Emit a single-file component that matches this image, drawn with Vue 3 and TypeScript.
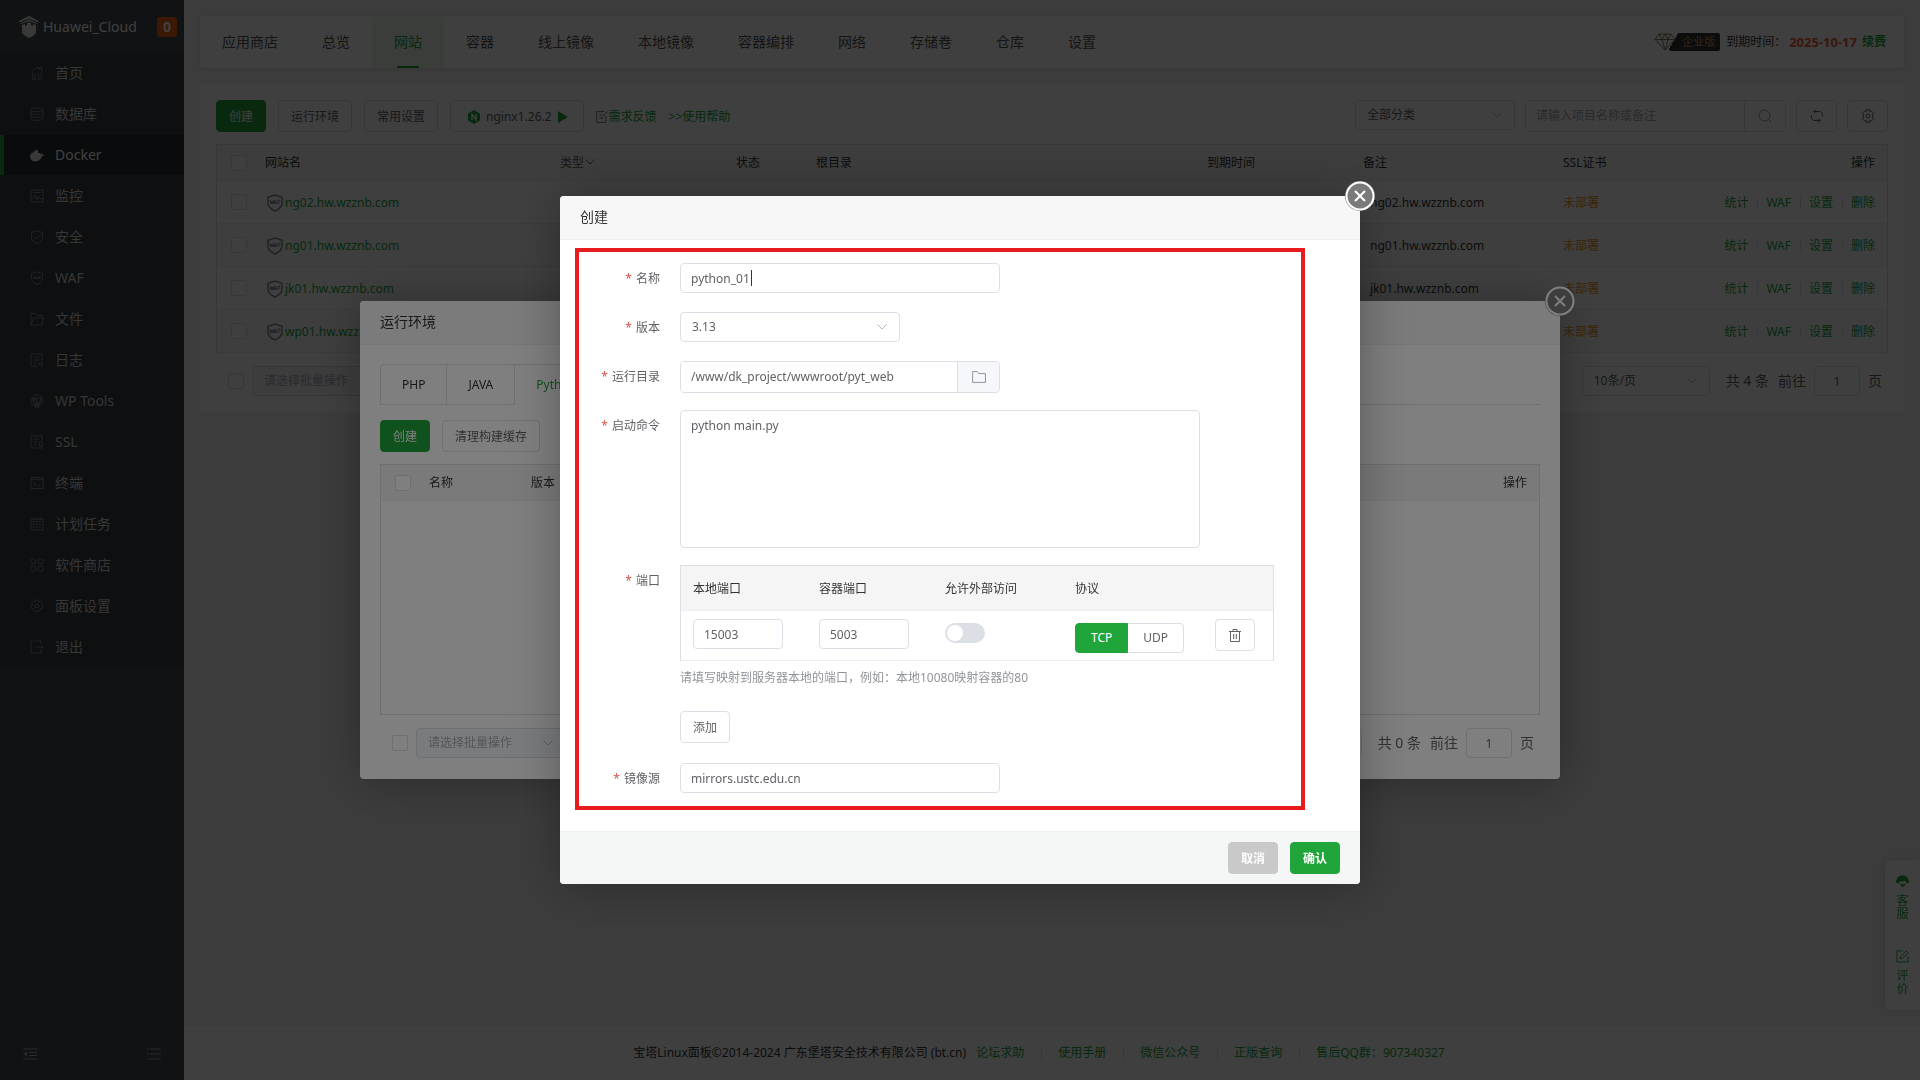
<script setup lang="ts">
import { ref } from 'vue'

interface MenuItem {
  label: string
  icon: string
  active?: boolean
}

const menu: MenuItem[] = [
  { label: '首页', icon: '<path d="M1 6.5 7 1l2.6 2.4V1.5h2v3.6L13 6.5M2.8 6v7.3h2.6V9.2c0-2 3.2-2 3.2 0v4.1h2.6V6"/>' },
  { label: '数据库', icon: '<ellipse cx="7" cy="2.8" rx="6" ry="2"/><path d="M1 2.8v8.4c0 1.2 2.7 2.2 6 2.2s6-1 6-2.2V2.8M1 5.6c0 1.2 2.7 2 6 2s6-.8 6-2M1 8.4c0 1.2 2.7 2 6 2s6-.8 6-2"/>' },
  { label: 'Docker', active: true, icon: '<path fill="currentColor" stroke="none" d="M0 7h1V5h2V3.600h2V2h3v3h2v1.800c.6-.2.700-1.200 1-2 .8.400 1.100 1 1 1.700.8 0 1.400 0 2 .4-.3 1-1.200 1.400-2.200 1.400C11 11.600 8.800 13.500 5 13.500 1.500 13.500 0 10.500 0 7z"/>' },
  { label: '监控', icon: '<path d="M1 1h12v12H1zM3.500 3.500h7M1 9.500h2.500L5 6.500l2 4 1.500-3.500 1 2.500H13"/>' },
  { label: '安全', icon: '<path d="M7 .8 12.500 2.500v5c0 3-2.500 4.800-5.500 6-3-1.200-5.500-3-5.500-6v-5zM4.500 6.800l2 2 3.500-3.500"/>' },
  { label: 'WAF', icon: '<path d="M7 .8 12.500 2.500v5c0 3-2.500 4.800-5.500 6-3-1.200-5.500-3-5.500-6v-5zM3.500 5.500l.6 2.500.8-2 .8 2 .5-2.500M6.800 8l.8-2.500.8 2.500M9.500 8V5.500H11M9.500 6.800h1.200"/>' },
  { label: '文件', icon: '<path d="M1 13V1.500h4.500L7 3.500h5.500V6M1 13h11l1.300-7H3.500L1 13z"/>' },
  { label: '日志', icon: '<path d="M12 8V1H1v12h7M3.500 4h6M3.500 7h6M3.500 10h3"/><circle cx="11" cy="11" r="1.700"/>' },
  { label: 'WP Tools', icon: '<circle cx="7" cy="7" r="6.200"/><path stroke-width="1.500" d="M2.500 4.500l3 8 2-5.500M5.500 4.500l3 8 2.500-7M2 4.500h3M5 4.500h3.500M9.800 3.500c1 .8 1.400 1.500 1.200 2.500"/>' },
  { label: 'SSL', icon: '<path d="M12 6V1H1v12h7M3.500 4h6M3.500 7h4M3.500 10h3"/><circle cx="11" cy="9" r="2"/><path d="M9.700 10.500v3l1.300-.8 1.300.8v-3"/>' },
  { label: '终端', icon: '<path d="M1 1.500h12v11H1zM1 3.200h12M3.500 6.200l2 1.700-2 1.700M7 10h3.500"/>' },
  { label: '计划任务', icon: '<path d="M1 2h12v11H1zM1 4.800h12M4 .5V3M7 .5V3M10 .5V3M3 7.300h2M6 7.300h2M9 7.300h2M3 10.200h2M6 10.200h2M9 10.200h2"/>' },
  { label: '软件商店', icon: '<rect x="1" y="1" width="4.800" height="4.800" rx="1"/><rect x="8.200" y="1" width="4.800" height="4.800" rx="1"/><rect x="1" y="8.200" width="4.800" height="4.800" rx="1"/><rect x="8.200" y="8.200" width="4.800" height="4.800" rx="1"/>' },
  { label: '面板设置', icon: '<path d="M5.500 1h3l.5 1.700 1.700-.6 1.600 2L11.500 6l1.700 1-.9 2.700-1.900-.1-.4 2-2.300 1.100L7 11.500l-1.200 1.200-2.400-1.100-.3-2-1.800.1L.8 7l1.700-1-.9-1.900 1.700-2 1.800.6z"/><circle cx="7" cy="7" r="2"/>' },
  { label: '退出', icon: '<path d="M11 4V1H1v12h10v-3M5 7h8M10.800 4.800 13 7l-2.200 2.200"/>' },
]

const tabs = ['应用商店', '总览', '网站', '容器', '线上镜像', '本地镜像', '容器编排', '网络', '存储卷', '仓库', '设置']
const sites = ['ng02.hw.wzznb.com', 'ng01.hw.wzznb.com', 'jk01.hw.wzznb.com', 'wp01.hw.wzznb.com']
const actions = ['统计', 'WAF', '设置', '删除']
const footerLinks = ['论坛求助', '使用手册', '微信公众号', '正版查询', '售后QQ群：907340327']
const envTabs = ['PHP', 'JAVA', 'Python', 'Node.js', 'Go']
const envActive = ref('Python')

const form = ref({
  name: 'python_01',
  version: '3.13',
  path: '/www/dk_project/wwwroot/pyt_web',
  command: 'python main.py',
  hostPort: '15003',
  containerPort: '5003',
  external: false,
  protocol: 'TCP',
  mirror: 'mirrors.ustc.edu.cn',
})
</script>

<template>
  <div class="layout">
    <aside class="sidebar">
      <div class="brand">
        <svg class="brand-logo" viewBox="0 0 20 22" aria-hidden="true">
          <path d="M10 0 20 5v1.500L10 2.500 0 6.500V5zM10 3.500l8 3.500v1l-8-3-8 3V7z" />
          <path d="M3 9l3-1.200V10l2-1V7l2-.8 2 .8v2l2 1V7.800L17 9v7.500c-1 2.500-4 4.500-7 5.500-3-1-6-3-7-5.500z" />
        </svg>
        <span class="brand-name">Huawei_Cloud</span>
        <span class="brand-badge">0</span>
      </div>
      <nav class="menu">
        <a v-for="m in menu" :key="m.label" href="#" class="menu-item" :class="{ active: m.active }">
          <svg viewBox="0 0 14 14" aria-hidden="true" v-html="m.icon"></svg>
          <span>{{ m.label }}</span>
        </a>
      </nav>
      <div class="side-tools">
        <button type="button" aria-label="收起菜单">
          <svg viewBox="0 0 14 12"><path d="M0 1h14M6 4.500h8M6 7.500h8M0 11h14" /><path class="solid" d="M4 3.500v5L.5 6z" /></svg>
        </button>
        <button type="button" aria-label="菜单列表">
          <svg viewBox="0 0 14 12"><path d="M0 1h2M3 1h11M0 6h2M3 6h11M0 11h2M3 11h11" /></svg>
        </button>
      </div>
    </aside>

    <main class="main">
      <div class="content">
        <header class="topbar">
          <nav class="tabs">
            <a v-for="t in tabs" :key="t" href="#" class="tab" :class="{ active: t === '网站' }">{{ t }}</a>
          </nav>
          <div class="license">
            <span class="edition">
              <svg viewBox="0 0 22 18" aria-hidden="true">
                <path d="M5 1h12l4 5.500L11 17 1 6.500zM1 6.500h20M5 1l3 5.500L11 1l3 5.500L17 1M8 6.500 11 17l3-10.500" />
              </svg>
              <span class="edition-tag">企业版</span>
            </span>
            <span>到期时间：</span>
            <strong class="expire">2025-10-17</strong>
            <a href="#" class="renew">续费</a>
          </div>
        </header>

        <section class="card">
          <div class="toolbar">
            <button type="button" class="btn primary">创建</button>
            <button type="button" class="btn">运行环境</button>
            <button type="button" class="btn">常用设置</button>
            <button type="button" class="btn nginx">
              <svg class="nginx-logo" viewBox="0 0 12 14" aria-hidden="true">
                <path fill="#20a53a" d="M6 0l6 3.500v7L6 14 0 10.500v-7z" />
                <path fill="none" stroke="#fff" stroke-width="1.400" d="M4 10V4.300L8 9.700V4" />
              </svg>
              <span>nginx1.26.2</span>
              <svg class="play" viewBox="0 0 10 12" aria-hidden="true"><path fill="#20a53a" d="M0 0l10 6-10 6z" /></svg>
            </button>
            <a href="#" class="feedback">
              <svg viewBox="0 0 12 12" aria-hidden="true"><path d="M8 .6H.6v10.800h9.200V5M3 4h3M3 7h4M6.500 5.500 11.500.5" /></svg>需求反馈
            </a>
            <a href="#" class="help">&gt;&gt;使用帮助</a>
            <div class="tool-right">
              <div class="select cat">
                <select aria-label="分类"><option>全部分类</option></select>
                <svg viewBox="0 0 10 6" aria-hidden="true"><path d="M.5.5 5 5 9.500.5" /></svg>
              </div>
              <div class="search">
                <input type="text" aria-label="搜索" placeholder="请输入项目名称或备注" />
                <button type="button" aria-label="搜索按钮">
                  <svg viewBox="0 0 14 14"><circle cx="6.500" cy="6.500" r="5.500" /><path d="M10.500 10.500 13 13" /></svg>
                </button>
              </div>
              <button type="button" class="btn square" aria-label="刷新">
                <svg viewBox="0 0 14 14"><path d="M3.800 2.500H9c2.200 0 3.500 1.300 3.500 3.500v1.500M5.800.500l-2 2 2 2M1.500 6.500V8c0 2.200 1.300 3.500 3.500 3.500h5.200M8.200 9.500l2 2-2 2" /></svg>
              </button>
              <button type="button" class="btn square" aria-label="表格设置">
                <svg viewBox="0 0 14 14"><path d="M5.500.8h3L9 2.600l1.700-.5 1.800 2.400L11.500 6v2l1 1.500-1.800 2.400L9 11.400l-.5 1.800h-3L5 11.400l-1.700.5L1.500 9.500l1-1.500V6l-1-1.500 1.800-2.400L5 2.600z" /><circle cx="7" cy="7" r="2" /></svg>
              </button>
            </div>
          </div>

          <table class="grid sites">
            <colgroup>
              <col class="c-check" /><col class="c-name" /><col class="c-type" /><col class="c-state" /><col /><col class="c-date" /><col class="c-note" /><col class="c-ssl" /><col class="c-op" />
            </colgroup>
            <thead>
              <tr>
                <th class="chk"><input type="checkbox" aria-label="全选" /></th>
                <th>网站名</th>
                <th class="sortable">类型<svg viewBox="0 0 10 6" aria-hidden="true"><path d="M.5.5 5 5 9.500.5" /></svg></th>
                <th>状态</th>
                <th>根目录</th>
                <th>到期时间</th>
                <th>备注</th>
                <th>SSL证书</th>
                <th class="right">操作</th>
              </tr>
            </thead>
            <tbody>
              <tr v-for="s in sites" :key="s">
                <td class="chk"><input type="checkbox" :aria-label="s" /></td>
                <td>
                  <a href="#" class="site">
                    <svg viewBox="0 0 16 18" aria-hidden="true">
                      <path stroke-width="1.500" d="M8 1l7 2.200V9c0 4-3.500 6.500-7 8-3.500-1.500-7-4-7-8V3.200z" />
                      <path d="M3 6l1 4 1-3 1 3 .8-4M7.400 10l1-4 1 4M7.700 8.800h1.500M11 10V6.200h2.200M11 8h1.800" />
                    </svg>{{ s }}
                  </a>
                </td>
                <td></td>
                <td></td>
                <td></td>
                <td></td>
                <td class="note">{{ s }}</td>
                <td><a href="#" class="warn">未部署</a></td>
                <td class="right">
                  <span class="ops"><a v-for="a in actions" :key="a" href="#">{{ a }}</a></span>
                </td>
              </tr>
            </tbody>
          </table>

          <div class="pager">
            <input type="checkbox" aria-label="选择全部" />
            <div class="select batch">
              <select aria-label="批量操作" disabled><option>请选择批量操作</option></select>
              <svg viewBox="0 0 10 6" aria-hidden="true"><path d="M.5.5 5 5 9.500.5" /></svg>
            </div>
            <div class="select size">
              <select aria-label="每页条数"><option>10条/页</option></select>
              <svg viewBox="0 0 10 6" aria-hidden="true"><path d="M.5.5 5 5 9.500.5" /></svg>
            </div>
            <span class="total">共 4 条</span>
            <label class="jump">前往 <input type="text" value="1" /> 页</label>
          </div>
        </section>
      </div>

      <footer class="footer">
        <span>宝塔Linux面板©2014-2024 广东堡塔安全技术有限公司 (bt.cn)</span>
        <span class="footer-links"><a v-for="l in footerLinks" :key="l" href="#">{{ l }}</a></span>
      </footer>
    </main>

    <div class="float">
      <a href="#">
        <svg viewBox="0 0 14 14" aria-hidden="true"><path fill="#20a53a" d="M7 .5c3.500 0 6 2 6.200 4.500.6.300.8 1 .8 1.800 0 1.200-.6 2-1.600 2l-1.100.2L10 6C8.500 7 5.500 7.300 4 6.800L2.900 9C.8 9.300 0 8.300 0 7c0-.8.200-1.500.8-1.800C1 2.500 3.500.5 7 .5zM4 8.500c1 2 5 2 6.500 0-.3 2.500-1.800 3.800-3.500 4.500-1.600-.8-2.700-2.200-3-4.500z" /></svg>
        <span>客服</span>
      </a>
      <a href="#">
        <svg viewBox="0 0 14 14" aria-hidden="true"><path fill="none" stroke="#20a53a" d="M7.500 1H1v12h12V7M4.500 9.500l.6-2.600L11 1l2 2-6 6z" /></svg>
        <span>评价</span>
      </a>
    </div>

    <div class="mask">
      <section class="dialog env" role="dialog" aria-label="运行环境">
        <button type="button" class="close" aria-label="关闭运行环境">
          <svg viewBox="0 0 30 30"><circle cx="15" cy="15" r="13.500" /><path d="M10 10l10 10M20 10 10 20" /></svg>
        </button>
        <h2 class="dialog-title">运行环境</h2>
        <div class="env-body">
          <div class="env-tabs">
            <button v-for="t in envTabs" :key="t" type="button" :class="{ active: t === envActive }" @click="envActive = t">{{ t }}</button>
          </div>
          <div class="env-actions">
            <button type="button" class="btn primary">创建</button>
            <button type="button" class="btn">清理构建缓存</button>
          </div>
          <div class="env-table">
            <table class="grid">
              <colgroup><col class="c-check" /><col class="c-env" /><col /><col class="c-ssl" /></colgroup>
              <thead>
                <tr>
                  <th class="chk"><input type="checkbox" aria-label="全选环境" /></th>
                  <th>名称</th>
                  <th>版本</th>
                  <th class="right">操作</th>
                </tr>
              </thead>
            </table>
          </div>
          <div class="pager">
            <input type="checkbox" aria-label="选择全部环境" />
            <div class="select batch">
              <select aria-label="环境批量操作" disabled><option>请选择批量操作</option></select>
              <svg viewBox="0 0 10 6" aria-hidden="true"><path d="M.5.5 5 5 9.500.5" /></svg>
            </div>
            <div class="select size">
              <select aria-label="环境每页条数"><option>10条/页</option></select>
              <svg viewBox="0 0 10 6" aria-hidden="true"><path d="M.5.5 5 5 9.500.5" /></svg>
            </div>
            <span class="total">共 0 条</span>
            <label class="jump">前往 <input type="text" value="1" /> 页</label>
          </div>
        </div>
      </section>
    </div>

    <div class="mask">
      <section class="dialog create" role="dialog" aria-label="创建">
        <button type="button" class="close" aria-label="关闭">
          <svg viewBox="0 0 30 30"><circle cx="15" cy="15" r="13.500" /><path d="M10 10l10 10M20 10 10 20" /></svg>
        </button>
        <h2 class="dialog-title">创建</h2>
        <form class="form" @submit.prevent>
          <div class="marked">
            <div class="row">
              <label for="f-name">名称</label>
              <div class="control">
                <input id="f-name" v-model="form.name" class="field wide" type="text" />
                <i class="caret"></i>
              </div>
            </div>
            <div class="row">
              <label for="f-version">版本</label>
              <div class="select version">
                <select id="f-version" v-model="form.version"><option>3.13</option></select>
                <svg viewBox="0 0 10 6" aria-hidden="true"><path d="M.5.5 5 5 9.500.5" /></svg>
              </div>
            </div>
            <div class="row">
              <label for="f-path">运行目录</label>
              <div class="path">
                <input id="f-path" v-model="form.path" type="text" />
                <button type="button" aria-label="选择目录">
                  <svg viewBox="0 0 14 12"><path d="M.6.600h4.600l1.500 2h6.700v8.800H.6z" /></svg>
                </button>
              </div>
            </div>
            <div class="row">
              <label for="f-command">启动命令</label>
              <textarea id="f-command" v-model="form.command" spellcheck="false"></textarea>
            </div>
            <div class="row">
              <label for="f-host">端口</label>
              <div class="ports">
                <table class="grid port-table">
                  <colgroup><col class="p-a" /><col class="p-a" /><col class="p-b" /><col class="p-c" /><col /></colgroup>
                  <thead>
                    <tr><th>本地端口</th><th>容器端口</th><th>允许外部访问</th><th>协议</th><th></th></tr>
                  </thead>
                  <tbody>
                    <tr>
                      <td><input id="f-host" v-model="form.hostPort" class="field" type="text" /></td>
                      <td><input v-model="form.containerPort" class="field" type="text" aria-label="容器端口" /></td>
                      <td class="toggle"><input v-model="form.external" class="switch" type="checkbox" role="switch" aria-label="允许外部访问" /></td>
                      <td class="toggle">
                        <span class="proto">
                          <label v-for="p in ['TCP', 'UDP']" :key="p" :class="{ on: form.protocol === p }">
                            <input v-model="form.protocol" type="radio" name="protocol" :value="p" />{{ p }}
                          </label>
                        </span>
                      </td>
                      <td>
                        <button type="button" class="btn trash" aria-label="删除端口">
                          <svg viewBox="0 0 12 13"><path d="M0 2.500h12M4 2.500v-2h4v2M1.500 2.500v10h9v-10M4.700 5v5M7.300 5v5" /></svg>
                        </button>
                      </td>
                    </tr>
                  </tbody>
                </table>
                <p class="hint">请填写映射到服务器本地的端口，例如：本地10080映射容器的80</p>
                <button type="button" class="btn">添加</button>
              </div>
            </div>
            <div class="row">
              <label for="f-mirror">镜像源</label>
              <input id="f-mirror" v-model="form.mirror" class="field wide" type="text" />
            </div>
          </div>
          <div class="dialog-footer">
            <button type="button" class="btn cancel">取消</button>
            <button type="submit" class="btn primary strong">确认</button>
          </div>
        </form>
      </section>
    </div>
  </div>
</template>

<style>
body {
  background: #f0f0f0;
}
</style>

<style scoped>
* {
  box-sizing: border-box;
}
.layout {
  display: flex;
  min-height: 100vh;
  font-family: "Noto Sans", "Noto Sans CJK SC", sans-serif;
  font-size: 12px;
  line-height: 18px;
  color: #333;
}
a {
  color: #20a53a;
  text-decoration: none;
}
button,
input,
select,
textarea {
  font: inherit;
  color: #606266;
  margin: 0;
  outline: none;
}
svg {
  display: block;
  flex: none;
  fill: none;
  stroke: currentColor;
}

/* sidebar */
.sidebar {
  display: flex;
  flex-direction: column;
  width: 184px;
  flex: none;
  background: #42484d;
}
.brand {
  display: flex;
  align-items: center;
  height: 53px;
  padding: 0 7px 0 19px;
  color: #fff;
  font-size: 14px;
}
.brand-logo {
  width: 20px;
  height: 22px;
  fill: #e6e6e6;
  stroke: none;
}
.brand-name {
  margin-left: 4px;
}
.brand-badge {
  width: 20px;
  margin-left: auto;
  border-radius: 3px;
  background: #f0641e;
  font-weight: 700;
  line-height: 20px;
  text-align: center;
}
.menu {
  display: flex;
  flex-direction: column;
  gap: 1px;
  background: #363c40;
}
.menu-item {
  display: flex;
  align-items: center;
  gap: 11px;
  height: 40px;
  padding-left: 26px;
  border-left: 4px solid transparent;
  color: #d6d8da;
  font-size: 14px;
}
.menu-item svg {
  width: 14px;
  height: 14px;
  color: #85898c;
}
.menu-item.active {
  border-left-color: #20a53a;
  background: #282d30;
  color: #fff;
}
.menu-item.active svg {
  color: #e6e6e6;
}
.side-tools {
  display: flex;
  justify-content: space-between;
  margin-top: auto;
  padding: 0 23px 20px;
}
.side-tools button {
  padding: 0;
  border: 0;
  background: none;
  color: #a9acae;
}
.side-tools svg {
  width: 14px;
  height: 12px;
}
.side-tools .solid {
  fill: currentColor;
  stroke: none;
}

/* page */
.main {
  display: flex;
  flex: 1;
  flex-direction: column;
  min-width: 0;
}
.content {
  display: flex;
  flex: 1;
  flex-direction: column;
  gap: 16px;
  padding: 16px;
}
.topbar {
  display: flex;
  align-items: center;
  justify-content: space-between;
  height: 52px;
  padding-right: 18px;
  border-radius: 4px;
  background: #fff;
  box-shadow: 0 1px 3px 1px rgba(0, 0, 0, 0.06);
}
.tabs {
  display: flex;
  height: 100%;
}
.tab {
  display: flex;
  position: relative;
  align-items: center;
  padding: 0 22px;
  border-radius: 4px;
  color: #555;
  font-size: 14px;
}
.tab.active {
  background: #e9f6eb;
  color: #20a53a;
}
.tab.active::after {
  position: absolute;
  bottom: 0;
  left: 25px;
  width: 22px;
  height: 2px;
  background: #20a53a;
  content: "";
}
.license {
  display: flex;
  align-items: center;
}
.edition {
  display: flex;
  margin-right: 6px;
}
.edition svg {
  position: relative;
  width: 22px;
  height: 18px;
  margin-right: -7px;
  color: #8f7d5b;
}
.edition-tag {
  padding: 0 5px 0 13px;
  border-radius: 2px;
  background: linear-gradient(120deg, transparent 8px, #333 8px);
  color: #b8975a;
  font-size: 11px;
}
.expire {
  margin: 0 5px 0 3px;
  color: #ef5a37;
  font-size: 13px;
}
.renew {
  font-weight: 700;
}
.card {
  padding: 16px;
  border-radius: 4px;
  background: #fff;
}
.toolbar {
  display: flex;
  align-items: flex-start;
  gap: 12px;
  margin-bottom: 12px;
}
.btn {
  height: 32px;
  padding: 1px 12px 0;
  border: 1px solid #dcdfe6;
  border-radius: 4px;
  background: #fff;
  color: #606266;
  line-height: 30px;
  white-space: nowrap;
}
.btn.primary {
  border-color: #20a53a;
  background: #20a53a;
  color: #fff;
}
.btn.nginx {
  display: flex;
  align-items: center;
  gap: 6px;
  padding: 1px 15px 0 17px;
}
.nginx-logo {
  width: 12px;
  height: 14px;
  stroke: none;
}
.play {
  width: 10px;
  height: 12px;
  stroke: none;
}
.feedback,
.help {
  display: flex;
  align-items: center;
  height: 32px;
  padding-top: 2px;
}
.feedback {
  gap: 1px;
}
.feedback svg {
  width: 12px;
  height: 12px;
  color: #777;
}
.tool-right {
  display: flex;
  align-items: flex-start;
  gap: 10px;
  margin-left: auto;
}
.select {
  position: relative;
}
.select select {
  display: block;
  width: 100%;
  height: 30px;
  padding: 0 28px 0 11px;
  border: 1px solid #dcdfe6;
  border-radius: 4px;
  appearance: none;
  background: #fff;
  opacity: 1;
}
.select svg {
  position: absolute;
  top: 12px;
  right: 13px;
  width: 10px;
  height: 6px;
  color: #b4b8c0;
  pointer-events: none;
}
.select.cat {
  width: 160px;
}
.search,
.path {
  display: flex;
  height: 32px;
  border: 1px solid #dcdfe6;
  border-radius: 4px;
  overflow: hidden;
}
.search {
  width: 261px;
}
.search input,
.path input {
  flex: 1;
  min-width: 0;
  padding: 0 10px;
  border: 0;
  background: #fff;
}
.search input::placeholder {
  color: #a8abb2;
}
.search button,
.path button {
  display: flex;
  align-items: center;
  justify-content: center;
  width: 42px;
  padding: 0;
  border: 0;
  border-left: 1px solid #dcdfe6;
  background: #f5f7fa;
  color: #909399;
}
.search button {
  width: 41px;
  background: #fff;
}
.search svg,
.square svg {
  width: 14px;
  height: 14px;
}
.btn.square {
  display: flex;
  align-items: center;
  justify-content: center;
  width: 41px;
  padding: 0;
}

/* tables */
.grid {
  width: 100%;
  border: 1px solid #dcdfe6;
  border-spacing: 0;
  table-layout: fixed;
}
.grid th,
.grid td {
  padding: 0 12px;
  border-bottom: 1px solid #ebeef5;
  text-align: left;
  white-space: nowrap;
}
.grid th {
  height: 36px;
  background: #f5f5f5;
  font-weight: 400;
}
.sites {
  border-bottom: 0;
}
.sites td {
  height: 43px;
  padding-top: 2px;
}
.grid .chk {
  padding: 0 0 0 14px;
}
.grid .right {
  text-align: right;
}
.sites tbody tr:nth-child(even) {
  background: #fafafa;
}
.c-check {
  width: 36px;
}
.c-name {
  width: 295px;
}
.c-type {
  width: 176px;
}
.c-state {
  width: 80px;
}
.c-date {
  width: 156px;
}
.c-note,
.c-op {
  width: 200px;
}
.c-ssl {
  width: 136px;
}
.c-env {
  width: 102px;
}
.sortable {
  color: #606266;
}
.sortable svg {
  display: inline-block;
  width: 10px;
  height: 6px;
  margin-left: 1px;
  vertical-align: 2px;
}
input[type="checkbox"]:not(.switch) {
  display: block;
  width: 16px;
  height: 16px;
  border: 1px solid #dcdfe6;
  border-radius: 2px;
  appearance: none;
  background: #fff;
}
.site {
  display: flex;
  align-items: center;
  gap: 2px;
  padding-left: 2px;
}
.site svg {
  width: 16px;
  height: 18px;
  color: #85888c;
}
.grid .note {
  padding-left: 19px;
}
.warn {
  color: #e6982c;
}
.ops a + a::before {
  display: inline-block;
  width: 1px;
  height: 12px;
  margin: 0 8px 0 9px;
  background: #dcdfe6;
  vertical-align: -2px;
  content: "";
}

/* pagination */
.pager {
  display: flex;
  align-items: center;
  height: 30px;
  margin-top: 13px;
  padding: 0 6px 0 12px;
}
.select.batch {
  width: 150px;
  margin-left: 8px;
}
.select.batch select {
  background: #f5f7fa;
  color: #a8abb2;
}
.select.size {
  width: 128px;
  margin-left: auto;
}
.total {
  margin: 0 9px 0 16px;
  color: #606266;
  font-size: 14px;
}
.jump {
  display: flex;
  align-items: center;
  gap: 8px;
  color: #606266;
  font-size: 14px;
}
.jump input {
  width: 46px;
  height: 30px;
  padding: 0;
  border: 1px solid #dcdfe6;
  border-radius: 4px;
  background: #fff;
  font-size: 12px;
  text-align: center;
}

/* footer */
.footer {
  display: flex;
  align-items: center;
  justify-content: center;
  gap: 10px;
  height: 54px;
  padding-right: 26px;
  background: #fff;
}
.footer-links a + a::before {
  display: inline-block;
  width: 1px;
  height: 12px;
  margin: 0 16px 0 17px;
  background: #dcdfe6;
  vertical-align: -2px;
  content: "";
}

/* contact strip */
.float {
  display: flex;
  position: fixed;
  right: 0;
  bottom: 70px;
  flex-direction: column;
  gap: 30px;
  width: 35px;
  height: 150px;
  padding-top: 15px;
  border-radius: 6px 0 0 6px;
  background: #fff;
  box-shadow: 0 0 6px rgba(0, 0, 0, 0.12);
}
.float a {
  display: flex;
  flex-direction: column;
  align-items: center;
  gap: 6px;
}
.float svg {
  width: 13px;
  height: 13px;
  stroke: none;
}
.float span {
  width: 12px;
  line-height: 13px;
}

/* dialogs */
.mask {
  display: flex;
  position: fixed;
  inset: 0;
  align-items: center;
  justify-content: center;
  background: rgba(0, 0, 0, 0.5);
}
.dialog {
  position: relative;
  border-radius: 4px;
  background: #fff;
  box-shadow: 1px 1px 50px rgba(0, 0, 0, 0.3);
}
.dialog.env {
  width: 1200px;
}
.dialog.create {
  width: 800px;
}
.close {
  position: absolute;
  top: -15px;
  right: -15px;
  width: 30px;
  height: 30px;
  padding: 0;
  border: 0;
  border-radius: 50%;
  background: #7a7a7a;
  color: #fff;
}
.close svg {
  width: 30px;
  height: 30px;
  stroke-width: 2px;
}
.dialog-title {
  height: 44px;
  margin: 0;
  padding-left: 20px;
  border-bottom: 1px solid #eee;
  border-radius: 4px 4px 0 0;
  background: #f7f7f7;
  font-size: 14px;
  font-weight: 400;
  line-height: 42px;
}
.env-body {
  padding: 19px 20px 21px;
}
.env-tabs {
  display: flex;
  height: 41px;
  border-bottom: 1px solid #dcdfe6;
}
.env-tabs button {
  height: 41px;
  padding: 0 21px;
  border: 1px solid #dcdfe6;
  border-left: 0;
  background: #fff;
  color: #333;
}
.env-tabs button:first-child {
  border-left: 1px solid #dcdfe6;
  border-radius: 4px 0 0 0;
}
.env-tabs button.active {
  border-bottom-color: #fff;
  color: #20a53a;
}
.env-actions {
  display: flex;
  gap: 12px;
  margin: 15px 0 12px;
}
.env-table {
  height: 251px;
  border: 1px solid #dcdfe6;
}
.env-table .grid {
  border: 0;
}

/* create form */
.marked {
  display: flex;
  flex-direction: column;
  gap: 17px;
  width: 730px;
  margin: 8px 0 21px 15px;
  padding: 11px 0;
  border: 4px solid #e81c1c;
}
.row {
  display: flex;
  align-items: flex-start;
}
.row > label {
  width: 81px;
  margin-right: 20px;
  color: #606266;
  line-height: 32px;
  text-align: right;
}
.row > label::before {
  margin-right: 4px;
  color: #d9534f;
  content: "*";
}
.field {
  display: block;
  width: 90px;
  height: 30px;
  padding: 1px 10px 0;
  border: 1px solid #dcdfe6;
  border-radius: 4px;
  background: #fff;
}
.field.wide,
.path {
  width: 320px;
}
.control {
  position: relative;
}
.caret {
  position: absolute;
  top: 7px;
  left: 71px;
  width: 1px;
  height: 16px;
  background: #333;
}
.select.version {
  width: 220px;
}
.path button svg {
  width: 14px;
  height: 12px;
}
textarea {
  width: 520px;
  height: 138px;
  padding: 6px 10px;
  border: 1px solid #dcdfe6;
  border-radius: 4px;
  background: #fff;
  resize: none;
}
.ports {
  width: 594px;
  padding-bottom: 3px;
}
.port-table {
  border-bottom: 0;
}
.port-table th {
  height: 45px;
  padding-top: 1px;
}
.port-table td {
  height: 50px;
  padding-top: 8px;
  vertical-align: top;
}
.port-table .toggle {
  padding-top: 12px;
}
.p-a {
  width: 126px;
}
.p-b {
  width: 130px;
}
.p-c {
  width: 140px;
}
.switch {
  display: block;
  position: relative;
  width: 40px;
  height: 20px;
  border-radius: 10px;
  appearance: none;
  background: #dcdfe6;
}
.switch::before {
  position: absolute;
  top: 2px;
  left: 2px;
  width: 16px;
  height: 16px;
  border-radius: 50%;
  background: #fff;
  content: "";
}
.proto {
  display: flex;
}
.proto label {
  position: relative;
  height: 30px;
  padding: 0 15px;
  border: 1px solid #dcdfe6;
  border-radius: 0 4px 4px 0;
  color: #606266;
  line-height: 28px;
}
.proto label:first-child {
  border-radius: 4px 0 0 4px;
}
.proto label.on {
  border-color: #20a53a;
  background: #20a53a;
  color: #fff;
}
.proto label + label {
  border-left: 0;
}
.proto input {
  position: absolute;
  opacity: 0;
}
.btn.trash {
  display: flex;
  align-items: center;
  justify-content: center;
  width: 40px;
  padding: 0;
}
.trash svg {
  width: 12px;
  height: 13px;
}
.hint {
  margin: 8px 0 24px;
  color: #909399;
}
.dialog-footer {
  display: flex;
  align-items: center;
  justify-content: flex-end;
  gap: 12px;
  height: 53px;
  padding-right: 20px;
  border-top: 1px solid #edf1f0;
  border-radius: 0 0 4px 4px;
  background: #f5f7f7;
}
.btn.cancel {
  border-color: #c9c9c9;
  background: #c9c9c9;
  color: #fff;
  font-weight: 700;
}
.btn.strong {
  font-weight: 700;
}
</style>
